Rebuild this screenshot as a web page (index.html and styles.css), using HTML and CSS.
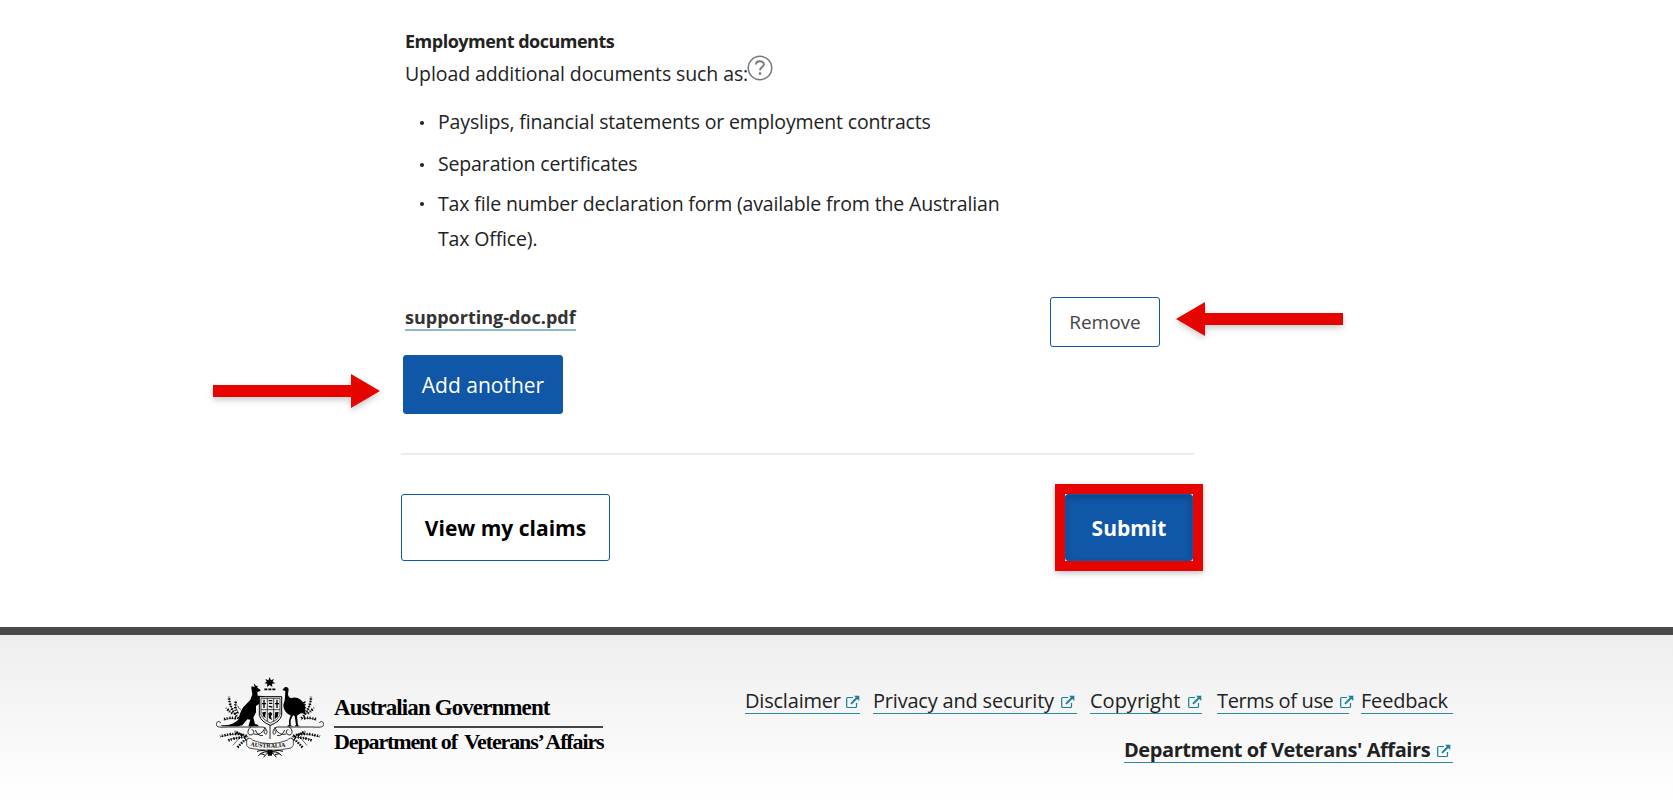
FILE: index.html
```html
<!doctype html>
<html lang="en-AU">
  <head>
    <meta charset="UTF-8" />
    <meta name="viewport" content="width=device-width, initial-scale=1.0" />
    <title>Employment documents</title>
    <link rel="stylesheet" href="styles.css">
  </head>
  <body>
    <svg width="0" height="0" class="symbols">
      <symbol id="external" viewBox="0 0 14 14">
        <path d="M7 2.5H1.6Q.7 2.5 .7 3.4V11.6Q.7 12.5 1.6 12.5H9.6Q10.5 12.5 10.5 11.6V8" fill="none" stroke="currentColor" stroke-width="1.2"/>
        <path d="M5 8.8L10.8 3" stroke="currentColor" stroke-width="1.9"/>
        <path d="M8 .8H13.3V6.1Z" fill="currentColor"/>
      </symbol>
    </svg>

    <main class="content">
      <h2 class="title">Employment documents</h2>
      <p class="intro"><span class="intro-text">Upload additional documents such as:</span>
        <svg class="help" viewBox="0 0 26 26" role="img" aria-label="Help">
          <circle cx="13" cy="13" r="11.7" fill="none" stroke="#777" stroke-width="1.5"/>
          <path d="M9 9.4C9 5.3 16.9 5.2 16.9 9.3C16.9 12 13 12 13 15.3" fill="none" stroke="#777" stroke-width="1.9"/>
          <circle cx="13" cy="18.6" r="1.3" fill="#777"/>
        </svg>
      </p>
      <ul class="doc-list">
        <li class="payslips">Payslips, financial statements or employment contracts</li>
        <li class="separation">Separation certificates</li>
        <li class="tax">Tax file number declaration form (available from the Australian<br>Tax Office).</li>
      </ul>

      <div class="file-row">
        <a class="file" href="#">supporting-doc.pdf</a>
        <button class="btn btn-remove">Remove</button>
        <svg class="arrow arrow-left" viewBox="0 0 168 36">
          <path d="M0 18L29 1V12H167V24H29V35Z" fill="#e60400"/>
        </svg>
      </div>
      <div class="add-row">
        <button class="btn btn-primary btn-add">Add another</button>
        <svg class="arrow arrow-right" viewBox="0 0 168 36">
          <path d="M167 18L138 1V12H0V24H138V35Z" fill="#e60400"/>
        </svg>
      </div>

      <hr class="divider">

      <div class="actions">
        <button class="btn btn-claims">View my claims</button>
        <div class="highlight">
          <button class="btn btn-primary btn-submit">Submit</button>
        </div>
      </div>
    </main>

    <footer class="footer">
      <div class="brand">
        <svg class="crest" viewBox="33 36 324 243" role="img" aria-label="Commonwealth Coat of Arms">
          <!-- star and wreath -->
          <path d="M194 37L198 46L207 42L203 50L211 55L201 56L202 66L194 60L186 66L187 56L178 55L185 50L181 42L190 46Z"/>
          <path d="M178 73H212" stroke="#000" stroke-width="5" stroke-dasharray="9 3"/>
          <!-- kangaroo -->
          <path d="M139 69L140 64L149 66L146 55L154 63L158 62L157 68L166 74L166 78L157 81L158 92L176 93V97L163 101L166 110L163 116L153 123V142L145 158L150 177L160 180V184H130L136 164L127 163L112 181L100 184H52L47 180C70 183 88 176 100 164C104 150 107 132 122 119L136 104L142 88Z"/>
          <!-- emu -->
          <path d="M232 75L239 67Q248 64 251 72L249 87Q249 96 258 100C273 93 293 103 300 123L301 149L294 140C284 148 278 149 276 153L279 181L286 184H268L273 180L269 153L264 151L257 166L257 181L264 184H246L252 179V166L257 151C242 145 235 132 235 119Q240 107 240 97L241 78Z"/>
          <!-- shield -->
          <path d="M163 95H230V151Q225 170 196 181Q168 170 163 151Z" fill="#f0f0f0" stroke="#000" stroke-width="3"/>
          <path d="M168 100H225V150Q219 165 196 174Q174 165 168 150ZM168 134H225M187 100V170M206 100V170" fill="none" stroke="#000" stroke-width="2"/>
          <path d="M177 104V129M171 116H183M216 104V129M210 116H222M191 107H202M192 115H202M191 124L202 126" stroke="#000" stroke-width="4"/>
          <path d="M172 142L183 140L180 154L184 160L174 154ZM190 144L197 141L202 146L198 154L201 165L192 160ZM210 142L221 141L218 155L209 162Z"/>
          <!-- ground scroll -->
          <g fill="none" stroke="#000" stroke-width="2.5">
            <path d="M47 174C43 166 34 170 34 178C34 188 48 187 70 186H172C187 187 188 206 184 207C175 208 176 195 183 195"/>
            <path d="M343 174C347 166 356 170 356 178C356 188 342 187 320 186H218C203 187 202 206 206 207C215 208 214 195 207 195"/>
            <path d="M195 180V222M139 184C128 192 125 207 135 210C147 211 151 195 140 194M251 184C262 192 265 207 255 210C243 211 239 195 250 194"/>
            <path d="M181 187Q169 214 146 207M209 187Q221 214 244 207M151 195Q160 216 174 211M239 195Q230 216 216 211"/>
          </g>
          <!-- wattle -->
          <g fill="none" stroke="#000" stroke-width="1.8">
            <path d="M105 166C87 145 74 126 72 96M101 146Q88 129 92 111M86 145Q76 145 65 130M94 160Q72 158 56 165M108 134Q99 130 98 122"/>
            <path d="M288 166C303 145 317 126 318 96M289 146Q302 129 298 111M304 145Q314 145 325 130M296 160Q318 158 334 165M282 134Q292 130 294 122"/>
            <path d="M130 215Q104 199 48 215M128 216Q92 217 70 225M132 219Q112 228 98 246M116 213L91 199M103 219L84 241"/>
            <path d="M260 215Q286 199 342 215M262 216Q298 217 320 225M258 219Q278 228 292 246M274 213L299 199M287 219L306 241"/>
          </g>
          <g fill="none" stroke="#000" stroke-width="8" stroke-dasharray="4 5 3 4">
            <path d="M101 160C85 143 72 121 72 94M97 145Q87 127 93 109M82 145Q76 143 63 128M93 160Q71 156 55 164"/>
            <path d="M289 160C305 143 318 121 318 94M293 145Q303 127 297 109M308 145Q314 143 327 128M297 160Q319 156 335 164"/>
            <path d="M125 213Q94 200 45 214M121 217Q91 217 68 227M124 223Q112 229 97 248M112 211L89 199"/>
            <path d="M265 213Q296 200 345 214M269 217Q299 217 322 227M266 223Q278 229 293 248M278 211L301 199"/>
          </g>
          <!-- name ribbon -->
          <path d="M125 225Q133 214 144 226Q195 246 246 226Q257 214 265 225V241L258 249Q196 263 132 249L125 241Z" fill="#f6f6f6" stroke="#000" stroke-width="2"/>
          <path id="ribbon" d="M136 243Q195 253 255 243" fill="none"/>
          <text class="ribbon-text"><textPath href="#ribbon">AUSTRALIA</textPath></text>
          <path d="M156 259Q179 252 195 264Q211 252 234 259M160 272Q178 254 195 264Q213 254 230 272M176 277Q186 261 195 264Q204 261 214 277M166 266L179 269M223 266L210 269" fill="none" stroke="#000" stroke-width="3"/>
          <path d="M187 254H203L201 272H189Z"/>
        </svg>
        <div class="brand-text">
          <span class="brand-gov">Australian Government</span>
          <span class="brand-dept"><span>Department of</span> <span class="brand-va">Veterans’ Affairs</span></span>
        </div>
      </div>
      <nav class="links">
        <div class="link-row">
          <a class="link disclaimer" href="#">Disclaimer<svg class="ext"><use href="#external"/></svg></a>
          <a class="link privacy" href="#">Privacy and security<svg class="ext"><use href="#external"/></svg></a>
          <a class="link copyright" href="#">Copyright<svg class="ext"><use href="#external"/></svg></a>
          <a class="link terms" href="#">Terms of use<svg class="ext"><use href="#external"/></svg></a>
          <a class="link feedback" href="#">Feedback</a>
        </div>
        <a class="link dva" href="#">Department of Veterans' Affairs<svg class="ext"><use href="#external"/></svg></a>
      </nav>
    </footer>
  </body>
</html>
```

FILE: styles.css
```css
* {
  box-sizing: border-box;
}

body {
  margin: 0;
  height: 808px;
  overflow: hidden;
  background: #fff;
  color: #222;
  font-family: "Open Sans", "Noto Sans", sans-serif;
  display: flex;
  flex-direction: column;
}

.symbols {
  position: absolute;
}

/* Main content */
.content {
  width: 793px;
  height: 627px;
  margin-left: 401px;
  padding-top: 28px;
}

.title {
  margin: 0 0 4px 4px;
  font-size: 18px;
  line-height: 26px;
  font-weight: 700;
  letter-spacing: -0.5px;
}

.intro {
  margin: 0 0 14px 4px;
  height: 32px;
  font-size: 19.5px;
  line-height: 32px;
  letter-spacing: -0.1px;
  display: flex;
}

.intro-text {
  width: 342px;
  white-space: nowrap;
}

.help {
  width: 26px;
  height: 26px;
  margin-top: -3px;
}

.doc-list {
  list-style: none;
  margin: 0;
  padding: 0 0 0 37px;
  font-size: 19.5px;
  line-height: 35px;
  letter-spacing: -0.15px;
  white-space: nowrap;
}

.doc-list li {
  position: relative;
}

.doc-list li::before {
  content: "";
  position: absolute;
  left: -18px;
  top: 17px;
  width: 4px;
  height: 4px;
  border-radius: 50%;
  background: #222;
}

.doc-list .tax::before {
  top: 16px;
}

.separation {
  margin: 7px 0 5px;
}

/* Uploaded file */
.file-row {
  position: relative;
  display: flex;
  justify-content: space-between;
  align-items: flex-start;
  height: 50px;
  margin: 41px 34px 0 4px;
}

.file {
  margin-top: 8px;
  font-size: 18px;
  line-height: 24px;
  font-weight: 700;
  color: #333;
  text-decoration: none;
  border-bottom: 2px solid #8bbccb;
}

.btn {
  padding: 0;
  font-family: inherit;
  border: 1px solid #1057a7;
  border-radius: 3px;
  background: #fff;
  white-space: nowrap;
}

.btn-primary {
  background: #1057a7;
  color: #fff;
}

.btn-remove {
  width: 110px;
  height: 50px;
  font-size: 19px;
  color: #444;
}

.add-row {
  position: relative;
  height: 59px;
  margin: 8px 0 39px 2px;
}

.btn-add {
  width: 160px;
  height: 59px;
  font-size: 21px;
}

/* Callouts */
.arrow {
  position: absolute;
  width: 168px;
  height: 36px;
  overflow: visible;
  filter: drop-shadow(0 3px 3px rgba(0, 0, 0, 0.2));
}

.arrow-left {
  left: 771px;
  top: 4px;
}

.arrow-right {
  left: -190px;
  top: 18px;
}

.divider {
  height: 2px;
  margin: 0 0 29px;
  border: 0;
  background: #ebebeb;
}

.actions {
  display: flex;
  justify-content: space-between;
  align-items: center;
  height: 87px;
  margin-right: -9px;
}

.btn-claims {
  width: 209px;
  height: 67px;
  font-size: 21px;
  font-weight: 700;
  color: #000;
}

.highlight {
  border: 10px solid #e60400;
  box-shadow: 0 2px 6px rgba(0, 0, 0, 0.25);
}

.btn-submit {
  display: block;
  width: 128px;
  height: 67px;
  font-size: 21px;
  font-weight: 700;
  box-shadow: inset 0 3px 6px rgba(0, 0, 0, 0.2);
}

/* Footer */
.footer {
  height: 181px;
  padding: 0 220px 0 216px;
  border-top: 8px solid #4a4a4a;
  background: linear-gradient(#eee, #fff 96%);
  display: flex;
  justify-content: space-between;
}

.brand {
  display: flex;
  gap: 10px;
  padding-top: 42px;
}

.crest {
  width: 108px;
  height: 81px;
}

.ribbon-text {
  font: bold 18px "Liberation Serif", serif;
}

.brand-text {
  width: 269px;
  padding-top: 18px;
  font-family: "Liberation Serif", serif;
  font-size: 22px;
  font-weight: 700;
  line-height: 26px;
  color: #000;
  white-space: nowrap;
}

.brand-gov,
.brand-dept {
  display: block;
}

.brand-gov {
  padding-bottom: 5px;
  border-bottom: 2px solid #444;
  font-size: 23px;
  letter-spacing: -0.9px;
}

.brand-dept {
  padding-top: 1px;
  letter-spacing: -1.12px;
}

.brand-va {
  margin-left: 3px;
}

.links {
  display: flex;
  flex-direction: column;
  align-items: flex-end;
  padding-top: 50px;
  font-size: 20px;
}

.link-row {
  display: flex;
  margin-bottom: 20px;
}

.link {
  display: flex;
  justify-content: space-between;
  height: 29px;
  line-height: 32px;
  letter-spacing: -0.2px;
  color: #222;
  text-decoration: none;
  white-space: nowrap;
  border-bottom: 1px solid #2b8a9f;
}

.ext {
  width: 14px;
  height: 14px;
  margin-top: 10px;
  flex: none;
  color: #1a7f97;
}

.disclaimer {
  width: 115px;
  margin-right: 13px;
}

.privacy {
  width: 204px;
  margin-right: 13px;
  padding-right: 2px;
}

.copyright {
  width: 112px;
  margin-right: 15px;
  letter-spacing: 0;
}

.terms {
  width: 132px;
  margin-right: 12px;
  letter-spacing: -0.35px;
}

.terms .ext {
  margin-right: -5px;
}

.feedback {
  width: 92px;
}

.dva {
  width: 329px;
  padding-right: 2px;
  font-weight: 700;
  line-height: 31px;
  letter-spacing: -0.43px;
}
```
